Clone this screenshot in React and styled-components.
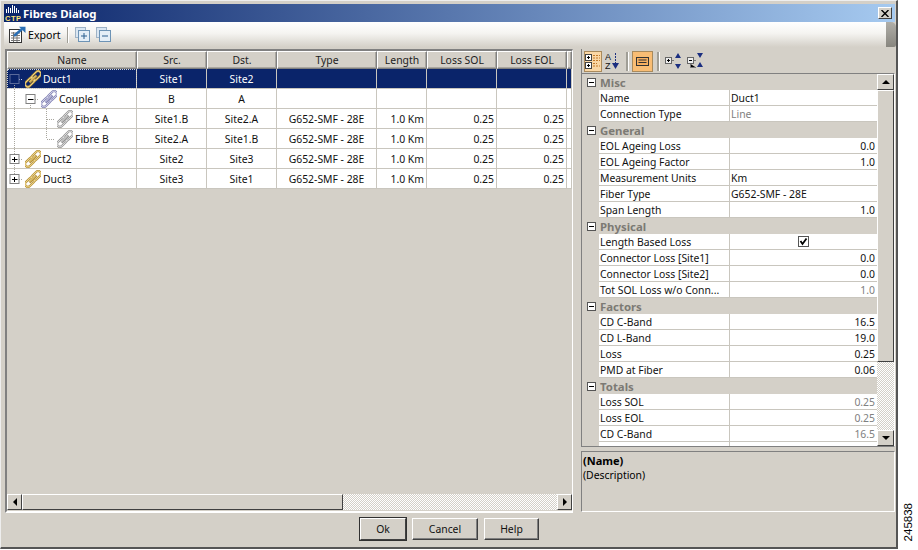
import React from "react";
import styled, { createGlobalStyle } from "styled-components";

const Global = createGlobalStyle`
  html, body { margin: 0; padding: 0; background: #fff; }
  body { font-family: "Noto Sans", "Open Sans", sans-serif; font-size: 10.4px; color: #000; }
`;

const FACE = "#d4d0c8";
const LINE = "#c9c6be";

const Page = styled.div`
  display: flex;
  width: 918px;
  height: 550px;
  overflow: hidden;
`;

const Win = styled.div`
  width: 898px;
  height: 549px;
  box-sizing: border-box;
  background: ${FACE};
  border-top: 1px solid #eee;
  border-left: 1px solid #eee;
  border-right: 2px solid #555;
  border-bottom: 2px solid #555;
  padding: 3px 1px 0 3px;
  display: flex;
  flex-direction: column;
`;

const SideNote = styled.div`
  flex: 1;
  display: flex;
  align-items: flex-end;
  justify-content: center;
  padding-bottom: 9px;
  span {
    writing-mode: vertical-rl;
    transform: rotate(180deg);
    font-family: "Liberation Sans", sans-serif;
    font-size: 11.5px;
    line-height: 12px;
  }
`;

const TitleBar = styled.div`
  height: 18px;
  flex: none;
  display: flex;
  align-items: center;
  background: linear-gradient(90deg, #0a246a, #a6caf0);
  color: #fff;
  font-weight: 700;
  font-size: 11.4px;
  padding: 0 3px 0 1px;
  gap: 2px;
`;

const TitleText = styled.div`
  flex: 1;
`;

const CloseBtn = styled.div`
  width: 14px;
  height: 12px;
  background: ${FACE};
  box-sizing: border-box;
  border: 1px solid;
  border-color: #fff #404040 #404040 #fff;
  display: flex;
  align-items: center;
  justify-content: center;
`;

const ToolRow = styled.div`
  height: 25px;
  flex: none;
  display: flex;
`;

const ToolStrip = styled.div`
  flex: 1;
  display: flex;
  align-items: center;
  gap: 6px;
  padding-left: 5px;
  background: linear-gradient(#fff, #f5f4f1 45%, ${FACE});
`;

const ToolEnd = styled.div`
  width: 10px;
  margin-right: -1px;
  background: linear-gradient(#b0aea8, #88867f);
  border-top-right-radius: 5px;
  border-bottom-right-radius: 2px;
`;

const ToolLabel = styled.span`
  margin-left: -4px;
  font-size: 10.6px;
`;

const ToolSep = styled.div`
  width: 1px;
  height: 16px;
  margin-right: 1px;
  background: #a09e96;
  box-shadow: 1px 0 0 #fff;
`;

const Main = styled.div`
  flex: none;
  display: flex;
  padding: 2px 0 0 1px;
`;

const LeftPane = styled.div`
  width: 568px;
  height: 464px;
  box-sizing: border-box;
  border: 1px solid;
  border-color: #808080 #fff #fff #808080;
  border-left-width: 2px;
  border-top-width: 2px;
  border-bottom-width: 2px;
  display: flex;
  flex-direction: column;
`;

const Grid = styled.div`
  flex: 1;
  min-height: 0;
`;

const cols = [130, 70, 70, 100, 50, 70, 70, 5];

const HeadRow = styled.div`
  display: flex;
  height: 18px;
`;

const HeadCell = styled.div`
  width: ${(p) => p.$w}px;
  flex: none;
  box-sizing: border-box;
  border: 1px solid;
  border-color: #fff #808080 #808080 #fff;
  box-shadow: inset -1px -1px 0 #aaa7a0;
  display: flex;
  align-items: center;
  justify-content: center;
  color: #222;
`;

const Row = styled.div`
  display: flex;
  height: 20px;
  background: ${(p) => (p.$selected ? "#0a246a" : "#fff")};
  color: ${(p) => (p.$selected ? "#fff" : "#111")};
`;

const Cell = styled.div`
  width: ${(p) => p.$w}px;
  flex: none;
  box-sizing: border-box;
  border-right: 1px solid ${LINE};
  border-bottom: 1px solid ${LINE};
  display: flex;
  align-items: center;
  justify-content: ${(p) => p.$align || "center"};
  padding: 0 2px;
  white-space: nowrap;
`;

const NameCell = styled(Cell)`
  justify-content: flex-start;
  padding: 0;
  gap: 2px;
  outline: ${(p) => (p.$focus ? "1px dotted #d8d8d8" : "none")};
  outline-offset: -1px;
`;

const HScroll = styled.div`
  display: flex;
  height: 16px;
  flex: none;
  margin-bottom: 1px;
`;

const ScrollBtn = styled.div`
  width: ${(p) => p.$w || 15}px;
  height: ${(p) => p.$h || 16}px;
  flex: none;
  box-sizing: border-box;
  background: ${FACE};
  border: 1px solid;
  border-color: #fff #404040 #404040 #fff;
  display: flex;
  align-items: center;
  justify-content: center;
`;

const Thumb = styled.div`
  flex: ${(p) => p.$grow};
  background: ${FACE};
  box-sizing: border-box;
  border: 1px solid;
  border-color: #fff #404040 #404040 #fff;
`;

const Track = styled.div`
  flex: ${(p) => p.$grow};
  background: repeating-conic-gradient(#fff 0 25%, ${FACE} 0 50%) 0 0 / 2px 2px;
`;

const Arrow = styled.div`
  width: 0;
  height: 0;
  border: 4px solid transparent;
  ${(p) => p.$dir === "left" && "border-right-color:#000;border-left-width:0;"}
  ${(p) => p.$dir === "right" && "border-left-color:#000;border-right-width:0;"}
  ${(p) => p.$dir === "up" && "border-bottom-color:#000;border-top-width:0;"}
  ${(p) => p.$dir === "down" && "border-top-color:#000;border-bottom-width:0;"}
`;

const RightPane = styled.div`
  width: 314px;
  margin-left: 8px;
  display: flex;
  flex-direction: column;
  height: 464px;
`;

const PropTools = styled.div`
  height: 24px;
  flex: none;
  display: flex;
  align-items: center;
  gap: 2px;
  padding-left: 2px;
  box-sizing: border-box;
  border-left: 1px solid #808080;
`;

const PropTool = styled.div`
  width: ${(p) => p.$w || 18}px;
  height: 21px;
  display: flex;
  align-items: center;
  justify-content: center;
  box-sizing: border-box;
  ${(p) => p.$on && `background:${p.$on};border:1px solid #a98a5c;`}
`;

const PropSep = styled.div`
  width: 2px;
  height: 19px;
  margin: 0 2px;
  background: #a09e96;
  box-shadow: 1px 0 0 #fff;
`;

const PropBody = styled.div`
  height: 374px;
  flex: none;
  display: flex;
  box-sizing: border-box;
  border: 1px solid;
  border-color: #808080 #fff #808080 #808080;
  overflow: hidden;
`;

const PropList = styled.div`
  flex: 1;
  overflow: hidden;
`;

const Category = styled.div`
  height: 16px;
  display: flex;
  align-items: center;
  gap: 4px;
  padding-left: 5px;
  font-weight: 700;
  color: #7c7a74;
  font-size: 11.4px;
`;

const PropRow = styled.div`
  height: 16px;
  margin-left: 17px;
  display: flex;
  background: #fff;
  box-sizing: border-box;
  border-bottom: 1px solid ${LINE};
`;

const PropName = styled.div`
  width: 131px;
  flex: none;
  box-sizing: border-box;
  padding-left: 1px;
  border-right: 1px solid ${LINE};
  line-height: 16px;
  white-space: nowrap;
  overflow: hidden;
  color: #111;
`;

const PropValue = styled.div`
  flex: 1;
  line-height: 16px;
  padding: 0 2px 0 1px;
  display: flex;
  justify-content: ${(p) => p.$align || "flex-start"};
  color: ${(p) => (p.$muted ? "#808080" : "#111")};
`;

const VScroll = styled.div`
  width: 17px;
  flex: none;
  display: flex;
  flex-direction: column;
`;

const Desc = styled.div`
  margin-top: 4px;
  height: 61px;
  flex: none;
  box-sizing: border-box;
  border: 1px solid;
  border-color: #808080 #fff #fff #808080;
  padding: 2px 1px;
  line-height: 14px;
  b { display: block; font-size: 11px; }
`;

const Footer = styled.div`
  flex: none;
  display: flex;
  padding: 5px 0 0 356px;
  gap: 6px;
`;

const Button = styled.div`
  width: ${(p) => p.$w}px;
  height: 22px;
  box-sizing: border-box;
  border: 1px solid;
  border-color: #fff #404040 #404040 #fff;
  box-shadow: ${(p) => (p.$def ? "0 0 0 1px #303030" : "inset -1px -1px 0 #808080")};
  display: flex;
  align-items: center;
  justify-content: center;
  color: #111;
`;

// small drawings

const Link = ({ color, fill }) => (
  <svg width="16" height="18" viewBox="0 0 16 18" style={{ flex: "none" }}>
    <g transform="rotate(-45 8 9)" fill="none">
      <rect x="-2" y="6.2" width="11" height="5.6" rx="2.8" stroke={color} strokeWidth="2.2" />
      <rect x="7" y="6.2" width="11" height="5.6" rx="2.8" stroke={color} strokeWidth="2.2" />
      <rect x="-2" y="6.2" width="11" height="5.6" rx="2.8" stroke={fill} strokeWidth="0.8" />
      <rect x="7" y="6.2" width="11" height="5.6" rx="2.8" stroke={fill} strokeWidth="0.8" />
      <path d="M3 9 H13" stroke={color} strokeWidth="2.6" />
      <path d="M3.5 8.6 H12.5" stroke={fill} strokeWidth="0.8" />
    </g>
  </svg>
);

const linkColors = {
  duct: ["#b8943a", "#f8e09a"],
  couple: ["#8484b4", "#e2e2f4"],
  fibre: ["#969696", "#ececec"],
};

// 16px per level, dotted tree lines and the +/- box
const Guides = ({ level, sign, up, down, through, dark }) => {
  const w = level * 16 + 16;
  const cx = level * 16 + 7.5;
  const dot = { stroke: "#a8a69e", strokeDasharray: "1 1", fill: "none", shapeRendering: "crispEdges" };
  return (
    <svg width={w} height="20" style={{ flex: "none" }}>
      {through.map((x) => (
        <path key={x} d={`M${x + 0.5} 0 V20`} {...dot} />
      ))}
      {up && <path d={`M${cx} 0 V10`} {...dot} />}
      {down && <path d={`M${cx} 10 V20`} {...dot} />}
      <path d={`M${cx} 10.5 H${w}`} {...dot} stroke={dark ? "#c8d0e8" : "#a8a69e"} />
      {sign && (
        <g>
          <rect x={cx - 4.5} y="5.5" width="9" height="9" fill={dark ? "#0a246a" : "#fff"} stroke={dark ? "#5a6a9a" : "#808080"} />
          <path d={`M${cx - 2.5} 10.5 H${cx + 3}`} stroke={dark ? "#0a246a" : "#000"} />
          {sign === "+" && <path d={`M${cx} 8 V13`} stroke="#000" />}
        </g>
      )}
    </svg>
  );
};

const ExportIcon = () => (
  <svg width="17" height="17" viewBox="0 0 17 17">
    <rect x="0.5" y="3.5" width="12" height="13" fill="#fff" stroke="#333" />
    <path d="M2 7H11M2 9.5H11M2 12H11M2 14.5H11M4.5 6V16M8 6V16" stroke="#777" />
    <path d="M5 10 L13 3" stroke="#2a6fb5" strokeWidth="2.4" />
    <path d="M10 0.8 H16.5 V7 Z" fill="#2a6fb5" />
  </svg>
);

const ExpandIcon = ({ minus }) => (
  <svg width="15" height="15" viewBox="0 0 15 15">
    <rect x="0.5" y="0.5" width="10" height="10" fill="#dbe7f2" stroke="#9fb3c6" />
    <rect x="3.5" y="3.5" width="11" height="11" fill="#e4eef7" stroke="#6d93b5" />
    <path d="M6 9 H12" stroke="#2b5f8f" />
    {!minus && <path d="M9 6 V12" stroke="#2b5f8f" />}
  </svg>
);

const CtpIcon = () => (
  <svg width="16" height="18" viewBox="0 0 16 18" style={{ flex: "none" }}>
    <path d="M1.5 9V5M3.5 9V3M5.5 9V4M7.5 9V1M9.5 9V2M11.5 9V4M13.5 9V6" stroke="#fff" />
    <text x="0" y="17" fontSize="7.5" fontWeight="700" fill="#ffe27a" fontFamily="Liberation Sans" textLength="16">CTP</text>
  </svg>
);

const CloseX = () => (
  <svg width="8" height="7" viewBox="0 0 8 7">
    <path d="M0.5 0 L7.5 7 M7.5 0 L0.5 7" stroke="#000" strokeWidth="1.4" />
  </svg>
);

const CategorizedIcon = () => (
  <svg width="16" height="16" viewBox="0 0 16 16">
    <rect x="0.5" y="1.5" width="6" height="6" fill="#fff" stroke="#444" />
    <rect x="0.5" y="9.5" width="6" height="6" fill="#fff" stroke="#444" />
    <path d="M2 4.5H5M3.5 3V6M2 12.5H5M3.5 11V14" stroke="#000" />
    <path d="M8 2.5H15M8 5H15M8 7.5H15M8 10.5H12M8 13H15" stroke="#c47a2a" strokeDasharray="2 1" />
  </svg>
);

const SortIcon = () => (
  <svg width="16" height="18" viewBox="0 0 16 18">
    <text x="0" y="8" fontSize="9" fontFamily="Liberation Sans" fill="#111">A</text>
    <text x="0" y="17" fontSize="9" fontFamily="Liberation Sans" fill="#111">Z</text>
    <path d="M10.5 1V12" stroke="#1c2f80" strokeDasharray="2 1" />
    <path d="M7 11 H14 L10.5 17 Z" fill="#1c2f80" />
  </svg>
);

const PagesIcon = () => (
  <svg width="13" height="9" viewBox="0 0 13 9">
    <rect x="0.5" y="0.5" width="12" height="8" fill="#f8b060" stroke="#333" />
    <path d="M2.5 3H10.5M2.5 5.5H10.5" stroke="#333" />
  </svg>
);

const TreeExpandIcon = () => (
  <svg width="17" height="16" viewBox="0 0 17 16">
    <rect x="0.5" y="4.5" width="6" height="6" fill="#eee" stroke="#666" />
    <path d="M2 7.5H5M3.5 6V9" stroke="#000" />
    <path d="M7 7.5H9" stroke="#777" />
    <path d="M13 0 L16 5 H10 Z M13 16 L16 11 H10 Z" fill="#1c2f80" />
  </svg>
);

const TreeCollapseIcon = () => (
  <svg width="17" height="16" viewBox="0 0 17 16">
    <rect x="0.5" y="4.5" width="6" height="6" fill="#eee" stroke="#666" />
    <path d="M2 7.5H5" stroke="#000" />
    <path d="M3.5 11V14.5H9M7 7.5H9" stroke="#777" />
    <path d="M10 0 H16 L13 5 Z M13 9 L16 14 H10 Z" fill="#1c2f80" />
  </svg>
);

const Minus = () => (
  <svg width="9" height="9" viewBox="0 0 9 9" style={{ flex: "none" }}>
    <rect x="0.5" y="0.5" width="8" height="8" fill="#fff" stroke="#555" />
    <path d="M2 4.5H7" stroke="#000" />
  </svg>
);

const Check = () => (
  <svg width="11" height="11" viewBox="0 0 11 11" style={{ marginTop: 2 }}>
    <rect x="0.5" y="0.5" width="10" height="10" fill="#fff" stroke="#555" />
    <path d="M2.5 5 L4.5 8 L8.5 2.5" fill="none" stroke="#000" strokeWidth="1.8" />
  </svg>
);

const headers = ["Name", "Src.", "Dst.", "Type", "Length", "Loss SOL", "Loss EOL", ""];

const G = "G652-SMF - 28E";
const rows = [
  { name: "Duct1", kind: "duct", level: 0, sign: "-", down: true, through: [], selected: true, vals: ["Site1", "Site2", "", "", "", ""] },
  { name: "Couple1", kind: "couple", level: 1, sign: "-", down: true, through: [7], vals: ["B", "A", "", "", "", ""] },
  { name: "Fibre A", kind: "fibre", level: 2, up: true, down: true, through: [7], vals: ["Site1.B", "Site2.A", G, "1.0 Km", "0.25", "0.25"] },
  { name: "Fibre B", kind: "fibre", level: 2, up: true, through: [7], vals: ["Site2.A", "Site1.B", G, "1.0 Km", "0.25", "0.25"] },
  { name: "Duct2", kind: "duct", level: 0, sign: "+", up: true, down: true, through: [], vals: ["Site2", "Site3", G, "1.0 Km", "0.25", "0.25"] },
  { name: "Duct3", kind: "duct", level: 0, sign: "+", up: true, through: [], vals: ["Site3", "Site1", G, "1.0 Km", "0.25", "0.25"] },
];

const props = [
  { cat: "Misc", items: [["Name", "Duct1"], ["Connection Type", "Line", "muted"]] },
  {
    cat: "General",
    items: [
      ["EOL Ageing Loss", "0.0", "num"],
      ["EOL Ageing Factor", "1.0", "num"],
      ["Measurement Units", "Km"],
      ["Fiber Type", G],
      ["Span Length", "1.0", "num"],
    ],
  },
  {
    cat: "Physical",
    items: [
      ["Length Based Loss", "check"],
      ["Connector Loss [Site1]", "0.0", "num"],
      ["Connector Loss [Site2]", "0.0", "num"],
      ["Tot SOL Loss w/o Conn...", "1.0", "numMuted"],
    ],
  },
  {
    cat: "Factors",
    items: [
      ["CD C-Band", "16.5", "num"],
      ["CD L-Band", "19.0", "num"],
      ["Loss", "0.25", "num"],
      ["PMD at Fiber", "0.06", "num"],
    ],
  },
  {
    cat: "Totals",
    items: [
      ["Loss SOL", "0.25", "numMuted"],
      ["Loss EOL", "0.25", "numMuted"],
      ["CD C-Band", "16.5", "numMuted"],
      ["CD L-Band", "19.0", "numMuted"],
    ],
  },
];

const alignFor = (i) => (i === 3 || i === 4 || i === 5 ? "flex-end" : "center");

const App = () => (
  <Page>
    <Global />
    <Win>
      <TitleBar>
        <CtpIcon />
        <TitleText>Fibres Dialog</TitleText>
        <CloseBtn>
          <CloseX />
        </CloseBtn>
      </TitleBar>
      <ToolRow>
        <ToolStrip>
          <ExportIcon />
          <ToolLabel>Export</ToolLabel>
          <ToolSep />
          <ExpandIcon />
          <ExpandIcon minus />
        </ToolStrip>
        <ToolEnd />
      </ToolRow>
      <Main>
        <LeftPane>
          <Grid>
            <HeadRow>
              {headers.map((h, i) => (
                <HeadCell key={i} $w={cols[i]}>
                  {h}
                </HeadCell>
              ))}
            </HeadRow>
            {rows.map((r) => (
              <Row key={r.name} $selected={r.selected}>
                <NameCell $w={cols[0]} $focus={r.selected}>
                  <Guides level={r.level} sign={r.sign} up={r.up} down={r.down} through={r.through} dark={r.selected} />
                  <Link color={linkColors[r.kind][0]} fill={linkColors[r.kind][1]} />
                  {r.name}
                </NameCell>
                {r.vals.map((v, i) => (
                  <Cell key={i} $w={cols[i + 1]} $align={alignFor(i)}>
                    {v}
                  </Cell>
                ))}
                <Cell $w={cols[7]} />
              </Row>
            ))}
          </Grid>
          <HScroll>
            <ScrollBtn>
              <Arrow $dir="left" />
            </ScrollBtn>
            <Thumb $grow={320} />
            <Track $grow={215} />
            <ScrollBtn>
              <Arrow $dir="right" />
            </ScrollBtn>
          </HScroll>
        </LeftPane>
        <RightPane>
          <PropTools>
            <PropTool $on="#fbd7a4" $w={18}>
              <CategorizedIcon />
            </PropTool>
            <PropTool>
              <SortIcon />
            </PropTool>
            <PropSep />
            <PropTool $on="#f9bd74" $w={21}>
              <PagesIcon />
            </PropTool>
            <PropSep />
            <PropTool $w={20}>
              <TreeExpandIcon />
            </PropTool>
            <PropTool $w={20}>
              <TreeCollapseIcon />
            </PropTool>
          </PropTools>
          <PropBody>
            <PropList>
              {props.map((c) => (
                <React.Fragment key={c.cat}>
                  <Category>
                    <Minus />
                    {c.cat}
                  </Category>
                  {c.items.map(([n, v, mode]) => (
                    <PropRow key={n}>
                      <PropName>{n}</PropName>
                      {v === "check" ? (
                        <PropValue $align="center">
                          <Check />
                        </PropValue>
                      ) : (
                        <PropValue
                          $align={mode === "num" || mode === "numMuted" ? "flex-end" : "flex-start"}
                          $muted={mode === "muted" || mode === "numMuted"}
                        >
                          {v}
                        </PropValue>
                      )}
                    </PropRow>
                  ))}
                </React.Fragment>
              ))}
            </PropList>
            <VScroll>
              <ScrollBtn $w={17} $h={16}>
                <Arrow $dir="up" />
              </ScrollBtn>
              <Thumb $grow={268} />
              <Track $grow={68} />
              <ScrollBtn $w={17} $h={16}>
                <Arrow $dir="down" />
              </ScrollBtn>
            </VScroll>
          </PropBody>
          <Desc>
            <b>(Name)</b>
            (Description)
          </Desc>
        </RightPane>
      </Main>
      <Footer>
        <Button $w={46} $def>
          Ok
        </Button>
        <Button $w={66}>Cancel</Button>
        <Button $w={55}>Help</Button>
      </Footer>
    </Win>
    <SideNote>
      <span>245838</span>
    </SideNote>
  </Page>
);

export default App;
